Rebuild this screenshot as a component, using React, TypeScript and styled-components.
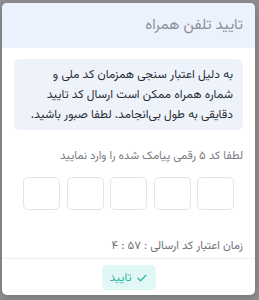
import React from "react";
import styled, { createGlobalStyle } from "styled-components";

const Global = createGlobalStyle`
  html, body { margin: 0; padding: 0; }
  body {
    background: #8e8e8e;
    font-family: Vazirmatn, Tahoma, "DejaVu Sans", "Noto Sans", sans-serif;
    width: 259px;
    height: 300px;
    overflow: hidden;
  }
`;

const Overlay = styled.div`
  width: 259px;
  height: 300px;
  padding: 3px 4px 5px 2px;
  box-sizing: border-box;
`;

const Dialog = styled.div`
  direction: rtl;
  width: 253px;
  height: 292px;
  background: #fff;
  border-radius: 5px;
  overflow: hidden;
  display: flex;
  flex-direction: column;
  box-shadow: 0 2px 8px rgba(0, 0, 0, 0.2);
`;

const Header = styled.div`
  flex-shrink: 0;
  height: 45px;
  background: #ebf2fd;
  display: flex;
  align-items: center;
  padding: 0 12px;
  font-size: 15px;
  color: #8b9099;
`;

const Body = styled.div`
  flex-shrink: 0;
  padding: 11px 12px 0;
  display: flex;
  flex-direction: column;
`;

const Info = styled.div`
  background: #eef3fb;
  border-radius: 6px;
  padding: 6px 10px 5px;
  font-size: 12px;
  line-height: 20px;
  color: #2b2f36;
  white-space: nowrap;
`;

const Label = styled.div`
  margin-top: 17px;
  font-size: 11.5px;
  color: #7a7d82;
  line-height: 18px;
`;

const Boxes = styled.div`
  margin-top: 12px;
  display: flex;
  justify-content: center;
  gap: 6.5px;
`;

const Box = styled.div`
  width: 35px;
  height: 31px;
  border: 1px solid #e3e4e6;
  border-radius: 5px;
`;

const Timer = styled.div`
  margin-top: 27px;
  font-size: 11.5px;
  color: #6f7278;
  line-height: 18px;
`;

const Footer = styled.div`
  flex-shrink: 0;
  margin-top: 3px;
  border-top: 1px solid #eeeeee;
  display: flex;
  justify-content: center;
  padding-top: 6px;
`;

const Button = styled.button`
  direction: rtl;
  display: flex;
  align-items: center;
  gap: 4px;
  height: 25px;
  padding: 0 8px;
  border: none;
  border-radius: 5px;
  background: #e2f8f6;
  color: #2fb8a3;
  font-family: inherit;
  font-size: 12px;
`;

export default function App() {
  return (
    <>
      <Global />
      <Overlay>
        <Dialog>
          <Header>تایید تلفن همراه</Header>
          <Body>
            <Info>
              به دلیل اعتبار سنجی همزمان کد ملی و
              <br />
              شماره همراه ممکن است ارسال کد تایید
              <br />
              دقایقی به طول بی‌انجامد. لطفا صبور باشید.
            </Info>
            <Label>لطفا کد ۵ رقمی پیامک شده را وارد نمایید</Label>
            <Boxes>
              {[0, 1, 2, 3, 4].map((i) => (
                <Box key={i} />
              ))}
            </Boxes>
            <Timer>زمان اعتبار کد ارسالی : ۵۷ : ۴</Timer>
          </Body>
          <Footer>
            <Button>
              <svg width="12" height="12" viewBox="0 0 24 24" fill="none" stroke="currentColor" strokeWidth="2.4" strokeLinecap="round" strokeLinejoin="round">
                <path d="M4 12.5l5 5L20 6.5" />
              </svg>
              تایید
            </Button>
          </Footer>
        </Dialog>
      </Overlay>
    </>
  );
}
